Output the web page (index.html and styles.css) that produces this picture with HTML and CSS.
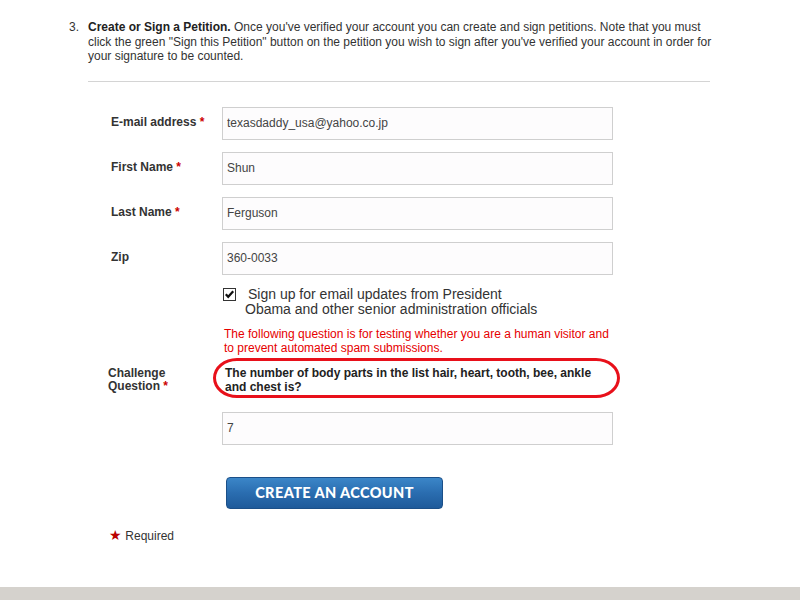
FILE: index.html
```html
<!DOCTYPE html>
<html>
<head>
<meta charset="utf-8">
<link rel="stylesheet" href="styles.css">
</head>
<body>
<div class="page">
  <main class="main">
    <div class="step">
      <span class="step-num">3.</span>
      <p class="step-text"><strong>Create or Sign a Petition.</strong> Once you've verified your account you can create and sign petitions. Note that you must click the green "Sign this Petition" button on the petition you wish to sign after you've verified your account in order for your signature to be counted.</p>
    </div>
    <div class="rule"></div>
    <form class="form">
      <div class="row">
        <label class="label">E-mail address <span class="req">*</span></label>
        <input class="input" type="text" value="texasdaddy_usa@yahoo.co.jp">
      </div>
      <div class="row">
        <label class="label">First Name <span class="req">*</span></label>
        <input class="input" type="text" value="Shun">
      </div>
      <div class="row">
        <label class="label">Last Name <span class="req">*</span></label>
        <input class="input" type="text" value="Ferguson">
      </div>
      <div class="row">
        <label class="label">Zip</label>
        <input class="input" type="text" value="360-0033">
      </div>
      <div class="row row-check">
        <span class="check">
          <svg width="13" height="13" viewBox="0 0 13 13"><rect x="0.5" y="0.5" width="12" height="12" fill="#fff" stroke="#333"/><path d="M2.8 6.3 L5.2 8.8 L10.2 3.2" fill="none" stroke="#111" stroke-width="2.2"/></svg>
        </span>
        <span class="check-text">Sign up for email updates from President Obama and other senior administration officials</span>
      </div>
      <p class="notice">The following question is for testing whether you are a human visitor and to prevent automated spam submissions.</p>
      <div class="row row-challenge">
        <label class="label label-challenge">Challenge<br>Question <span class="req">*</span></label>
        <div class="question">The number of body parts in the list hair, heart, tooth, bee, ankle and chest is?</div>
      </div>
      <div class="row row-answer">
        <span class="label"></span>
        <input class="input" type="text" value="7">
      </div>
      <div class="row row-button">
        <span class="label"></span>
        <button class="btn" type="button">CREATE AN ACCOUNT</button>
      </div>
      <div class="required"><span class="star">★</span> Required</div>
    </form>
  </main>
  <footer class="footer"></footer>
</div>
</body>
</html>
```
FILE: styles.css
```css
* { box-sizing: border-box; }
html, body { margin: 0; padding: 0; background: #fff; }
body {
  font-family: "Liberation Sans", Arial, sans-serif;
  font-size: 12px;
  color: #333;
}
.page {
  height: 600px;
  display: flex;
  flex-direction: column;
}
.main {
  flex: 1;
  padding: 20px 0 0 69px;
}
.step {
  display: flex;
  width: 651px;
}
.step-num {
  width: 19px;
  line-height: 14.5px;
  color: #333;
}
.step-text {
  margin: 0;
  flex: 1;
  line-height: 14.5px;
  color: #333;
}
.step-text strong { color: #222; }
.rule {
  margin: 17px 0 0 19px;
  width: 622px;
  border-top: 1px solid #d4d4d4;
}
.form {
  margin: 25px 0 0 39px;
}
.row {
  display: flex;
  align-items: flex-start;
  margin-bottom: 12px;
}
.label {
  width: 114px;
  flex: none;
  padding: 8px 0 0 3px;
  font-weight: bold;
  line-height: 14px;
  color: #333;
}
.req { color: #c00; }
.input {
  width: 391px;
  height: 33px;
  border: 1px solid #cfcfcf;
  background: #fdfcfd;
  padding: 0 0 0 4px;
  margin: 0;
  font-family: "Liberation Sans", Arial, sans-serif;
  font-size: 12px;
  color: #444;
  outline: none;
}
.row-check {
  margin: 3px 0 0 115px;
  align-items: flex-start;
}
.check { display: block; width: 13px; height: 13px; margin-top: 1px; }
.check svg { display: block; }
.check-text {
  margin-left: 9px;
  width: 296px;
  text-indent: 3px;
  font-size: 14px;
  line-height: 15px;
  color: #333;
}
.notice {
  margin: 10px 0 0 116px;
  width: 395px;
  color: #e60000;
  line-height: 14px;
}
.row-challenge {
  margin-top: 3px;
  margin-bottom: 14px;
}
.label-challenge {
  width: 105px;
  padding: 9px 0 0 0;
  line-height: 13px;
}
.question {
  width: 407px;
  height: 40px;
  border: 3px solid #e8101a;
  border-radius: 24px / 20px;
  padding: 5px 12px 0 9px;
  font-weight: bold;
  line-height: 14px;
  color: #222;
}
.row-answer { margin-bottom: 32px; }
.btn {
  margin-left: 4px;
  width: 217px;
  height: 32px;
  border: 1px solid #1b4f88;
  border-radius: 4px;
  background: linear-gradient(#3b86c8, #2a6db0 50%, #1e5a9a);
  color: #fff;
  font-family: Lato, "Liberation Sans", sans-serif;
  font-weight: 900;
  font-size: 14.5px;
  letter-spacing: 0.4px;
  padding: 0;
  cursor: pointer;
}
.row-button { margin-bottom: 19px; }
.required {
  padding-left: 1px;
  line-height: 14px;
  color: #333;
}
.star { color: #b00; font-size: 14px; }
.footer {
  height: 13px;
  background: #d5d2cd;
}
```
